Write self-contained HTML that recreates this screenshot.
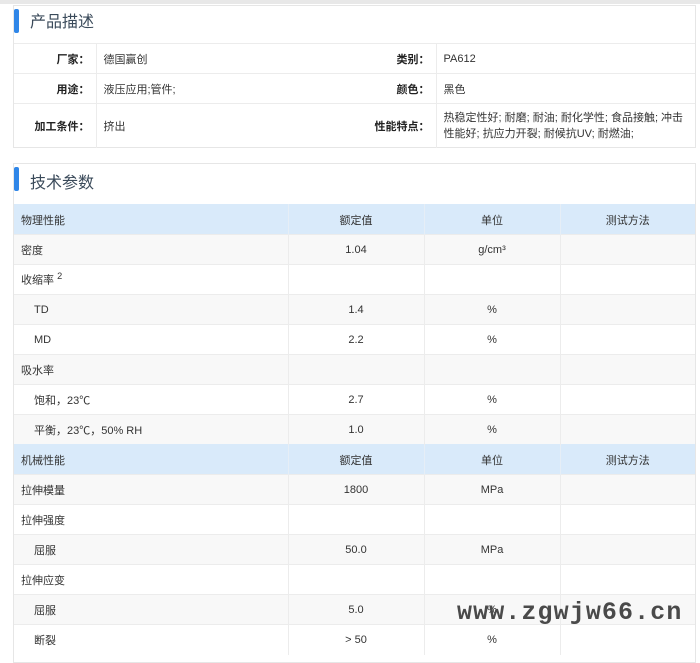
<!DOCTYPE html>
<html><head><meta charset="utf-8"><style>
*{margin:0;padding:0;box-sizing:border-box}
body{width:700px;height:656px;overflow:hidden;background:#fff;font-family:"Liberation Sans","Noto Sans CJK SC",sans-serif;font-size:11px;color:#333;position:relative}
.top{position:absolute;left:0;top:0;width:700px;height:4px;background:#e8e8e8}
.card{position:absolute;left:13px;width:683px;border:1px solid #e6e6e6;background:#fff}
.title{height:37px;position:relative;font-size:16px;color:#3a4a5a;padding-left:16px;line-height:33px}
.title:before{content:"";position:absolute;left:0;top:3px;width:5px;height:24px;background:#2f86e8;border-radius:2px}
table{border-collapse:collapse;width:100%}
td{border-top:1px solid #ececec;border-right:1px solid #ececec;height:30px;padding:0 7px}
td:last-child{border-right:none}
.d td.l{text-align:right;font-weight:bold;color:#222;padding-right:6px}
.d td.nb{border-right:none}
.t td{text-align:center}
.t td:first-child{text-align:left}
.t tr.h td{background:#d9eafa;border-color:#d9eafa;border-right-color:#e6eef6}
.t tr.g td{background:#f8f8f8}
.in{padding-left:20px!important}
.wm{position:absolute;left:457px;top:598px;font-family:"Liberation Mono",monospace;font-weight:bold;font-size:25px;color:#4a4a4a;letter-spacing:1.1px}
</style></head><body>
<div class="top"></div>
<div class="card" style="top:5px;height:143px">
<div class="title">产品描述</div>
<table class="d">
<tr><td class="l" style="width:82px">厂家：</td><td class="nb" style="width:258px">德国赢创</td><td class="l" style="width:82px">类别：</td><td>PA612</td></tr>
<tr><td class="l">用途：</td><td class="nb">液压应用;管件;</td><td class="l">颜色：</td><td>黑色</td></tr>
<tr><td class="l" style="height:44px">加工条件：</td><td class="nb">挤出</td><td class="l">性能特点：</td><td style="line-height:16px">热稳定性好; 耐磨; 耐油; 耐化学性; 食品接触; 冲击性能好; 抗应力开裂; 耐候抗UV; 耐燃油;</td></tr>
</table></div>
<div class="card" style="top:163px;height:500px">
<div class="title" style="height:40px;line-height:40px">技术参数</div>
<table class="t">
<tr class="h"><td style="width:274px">物理性能</td><td style="width:136px">额定值</td><td style="width:136px">单位</td><td>测试方法</td></tr>
<tr class="g"><td>密度</td><td>1.04</td><td>g/cm³</td><td></td></tr>
<tr><td>收缩率 <sup>2</sup></td><td></td><td></td><td></td></tr>
<tr class="g"><td class="in">TD</td><td>1.4</td><td>%</td><td></td></tr>
<tr><td class="in">MD</td><td>2.2</td><td>%</td><td></td></tr>
<tr class="g"><td>吸水率</td><td></td><td></td><td></td></tr>
<tr><td class="in">饱和，23℃</td><td>2.7</td><td>%</td><td></td></tr>
<tr class="g"><td class="in">平衡，23℃，50% RH</td><td>1.0</td><td>%</td><td></td></tr>
<tr class="h"><td>机械性能</td><td>额定值</td><td>单位</td><td>测试方法</td></tr>
<tr class="g"><td>拉伸模量</td><td>1800</td><td>MPa</td><td></td></tr>
<tr><td>拉伸强度</td><td></td><td></td><td></td></tr>
<tr class="g"><td class="in">屈服</td><td>50.0</td><td>MPa</td><td></td></tr>
<tr><td>拉伸应变</td><td></td><td></td><td></td></tr>
<tr class="g"><td class="in">屈服</td><td>5.0</td><td>%</td><td></td></tr>
<tr><td class="in">断裂</td><td>&gt; 50</td><td>%</td><td></td></tr>
</table></div>
<div class="wm">www.zgwjw66.cn</div>
</body></html>
